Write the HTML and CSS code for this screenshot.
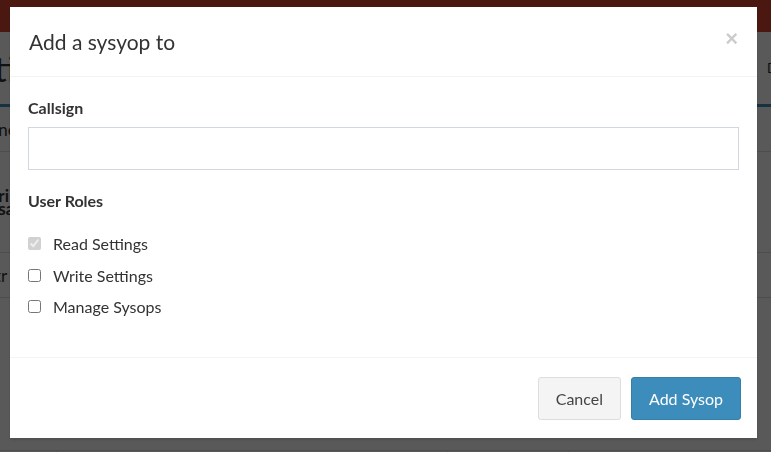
FILE: index.html
```html
<!DOCTYPE html>
<html lang="en">
<head>
  <meta charset="UTF-8" />
  <meta name="viewport" content="width=device-width, initial-scale=1.0"/>
  <title>Sysops</title>
  <link rel="stylesheet" href="styles.css">
</head>
<body>
  <div class="page">
    <header class="topbar"></header>
    <div class="content-head">
      <h1>Station</h1>
      <span class="crumb">Dashboard</span>
    </div>
    <div class="tabs"></div>
    <div class="row"><span class="shift">Une</span></div>
    <div class="row tall"><b class="shift">Uri<br>Usa</b></div>
    <div class="row"><span class="shift">Str</span></div>
    <div class="table">
      <div class="cell first"><b class="shift">Usi</b></div>
      <div class="cell wide">Sysop settings</div>
      <div class="cell mid"><b>(Site)</b></div>
      <div class="cell last">Manage and available</div>
    </div>
  </div>

  <div class="overlay">
    <div class="modal">
      <div class="modal-header">
        <h4 class="modal-title">Add a sysyop to</h4>
        <button class="close">&times;</button>
      </div>
      <div class="modal-body">
        <label class="field-label" for="callsign">Callsign</label>
        <input id="callsign" class="form-control" type="text">
        <div class="field-label roles">User Roles</div>
        <label class="check"><input type="checkbox" checked disabled> Read Settings</label>
        <label class="check"><input type="checkbox"> Write Settings</label>
        <label class="check"><input type="checkbox"> Manage Sysops</label>
      </div>
      <div class="modal-footer">
        <button class="btn btn-default">Cancel</button>
        <button class="btn btn-primary">Add Sysop</button>
      </div>
    </div>
  </div>
</body>
</html>
```

FILE: styles.css
```css
body {
  margin: 0;
  font-family: Lato, "Open Sans", sans-serif;
  color: #333;
  background: #fff;
  overflow: hidden;
}
.page {
  height: 452px;
  overflow: hidden;
}
.topbar {
  height: 32px;
  background-color: #d34733;
}
.content-head {
  display: flex;
  justify-content: space-between;
  align-items: center;
  height: 72px;
}
.content-head h1 {
  margin: 0 0 0 -52px;
  font-size: 34px;
  font-weight: 400;
  white-space: nowrap;
}
.crumb {
  font-size: 13px;
  margin-right: -58px;
}
.tabs {
  height: 3px;
  background: #3c8dbc;
}
.row {
  border-bottom: 1px solid #ddd;
  height: 44px;
  display: flex;
  align-items: center;
  font-size: 17px;
  white-space: nowrap;
}
.row.tall {
  height: 100px;
  line-height: 13px;
}
.shift {
  margin-left: -14px;
}
.table {
  display: flex;
  margin-top: 152px;
  border-top: 1px solid #ddd;
  font-size: 17px;
  white-space: nowrap;
}
.cell {
  height: 60px;
  border-right: 1px solid #ddd;
  padding: 6px 10px;
  box-sizing: border-box;
}
.cell.first { width: 64px; padding-left: 0; }
.cell.wide { width: 446px; }
.cell.mid { width: 136px; padding-top: 26px; text-align: center; }
.cell.last { flex: 1; border-right: none; padding-left: 32px; }

.overlay {
  position: fixed;
  inset: 0;
  background: rgba(0, 0, 0, 0.65);
}
.modal {
  margin: 7px 14px 0 10px;
  background: #fff;
  box-shadow: 0 2px 3px rgba(0, 0, 0, 0.125);
}
.modal-header {
  display: flex;
  align-items: center;
  justify-content: space-between;
  height: 69px;
  padding: 0 19px;
  border-bottom: 1px solid #f4f4f4;
}
.modal-title {
  margin: 0;
  font-size: 21px;
  font-weight: 400;
}
.close {
  border: none;
  background: none;
  padding: 0;
  font-size: 22px;
  font-weight: 700;
  color: #000;
  opacity: 0.2;
  font-family: "Liberation Sans", sans-serif;
  line-height: 1;
  margin-top: -6px;
}
.modal-body {
  padding: 21px 18px 22px 18px;
  height: 237px;
}
.field-label {
  display: block;
  font-weight: 700;
  font-size: 16px;
  margin-bottom: 10px;
}
.roles {
  margin-top: 21px;
  margin-bottom: 18px;
}
.form-control {
  display: block;
  box-sizing: border-box;
  width: 100%;
  height: 43px;
  border: 1px solid #d2d6de;
  padding: 6px 12px;
  font-size: 16px;
}
.check {
  display: flex;
  align-items: center;
  gap: 12px;
  font-size: 16px;
  height: 31.5px;
}
.check input {
  margin: 0;
  width: 13px;
  height: 13px;
}
.modal-footer {
  display: flex;
  justify-content: flex-end;
  gap: 10px;
  padding: 19px 16px 18px;
  border-top: 1px solid #f4f4f4;
}
.btn {
  font-family: inherit;
  font-size: 16px;
  height: 43px;
  padding: 0 17px;
  border-radius: 3px;
  border: 1px solid transparent;
}
.btn-default {
  background: #f4f4f4;
  border-color: #ddd;
  color: #444;
}
.btn-primary {
  background: #3c8dbc;
  border-color: #367fa9;
  color: #fff;
}
```
